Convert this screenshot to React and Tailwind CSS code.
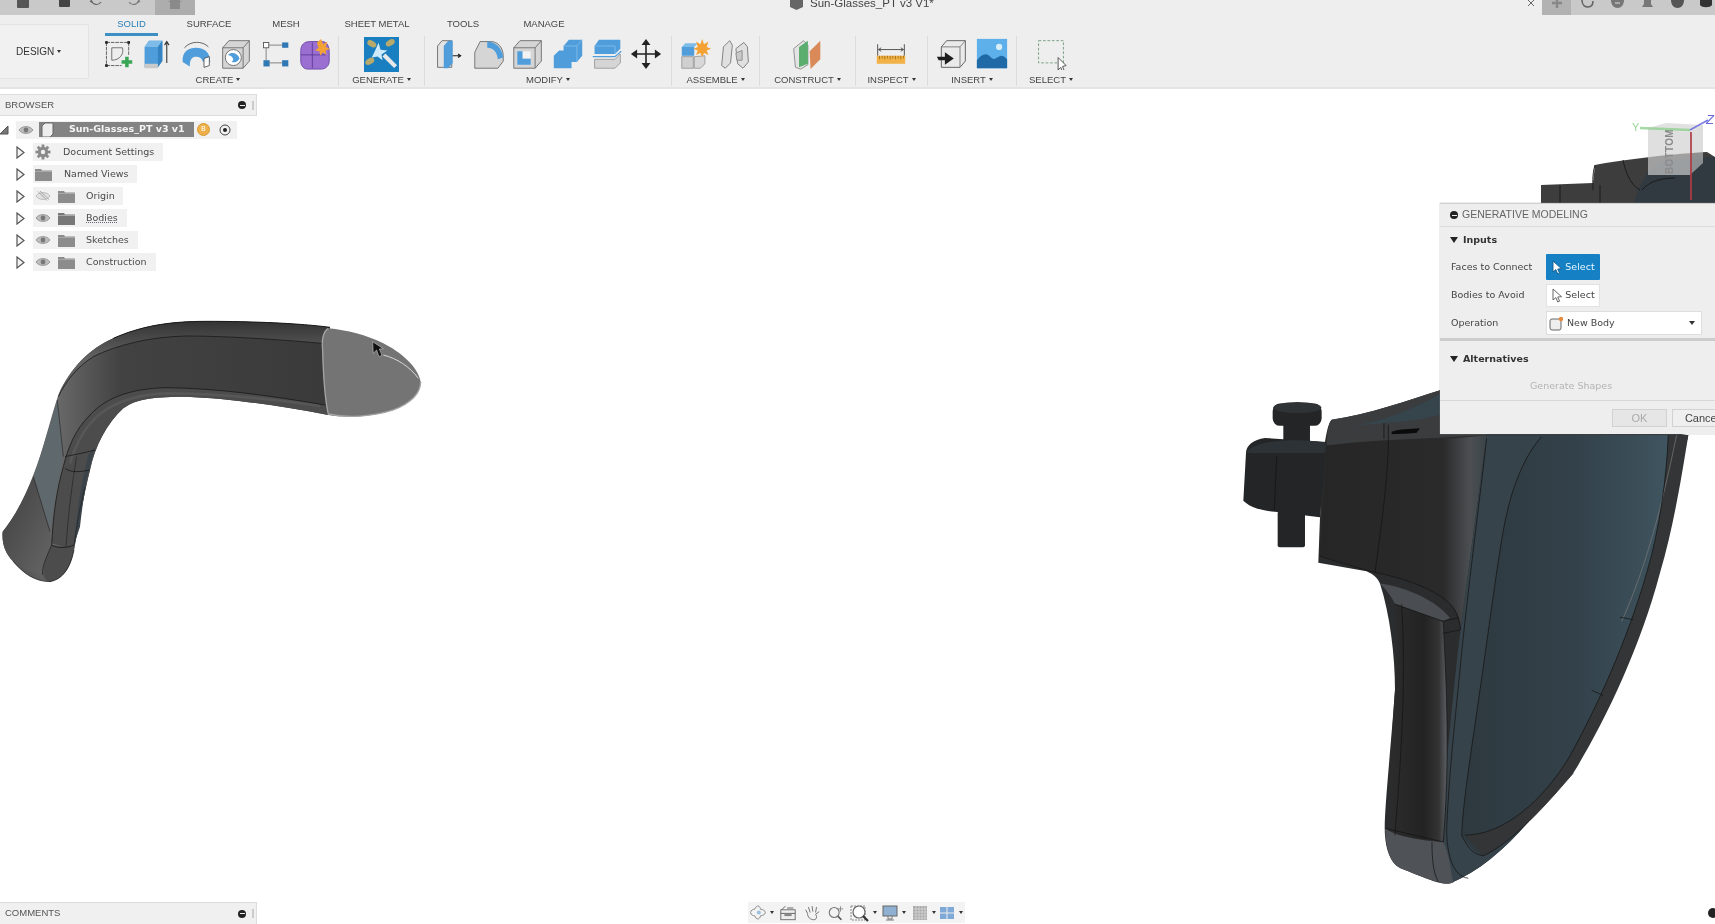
import React from "react";

const Eye = ({ off }) => (
  <svg width="16" height="12" viewBox="0 0 16 12">
    <path d="M1 6 C4 1.5 12 1.5 15 6 C12 10.5 4 10.5 1 6Z" fill={off ? "#e4e4e4" : "#bdbdbd"} stroke={off ? "#bbb" : "#999"} strokeWidth="1" />
    <circle cx="8" cy="6" r="2.4" fill={off ? "#ddd" : "#777"} />
    {off && <path d="M3 1.5 L12 10.5 M5 1 L14 9.5" stroke="#aaa" strokeWidth="1" />}
  </svg>
);
const Folder = ({ dotted }) => (
  <svg width="17" height="13" viewBox="0 0 17 13">
    <path d="M0 1 H6 L7 2.5 H17 V13 H0Z" fill={dotted ? "#777" : "#8c8c8c"} />
    <path d="M0 3.5 H17" stroke="#a8a8a8" strokeWidth="1" />
  </svg>
);
const Tri = () => (
  <svg width="9" height="13" viewBox="0 0 9 13" className="shrink-0">
    <path d="M1 1 L8 6.5 L1 12Z" fill="#f4f4f4" stroke="#555" strokeWidth="1.2" />
  </svg>
);
const Row = ({ label, eye, off, icon, dotted, w }) => (
  <div className="flex items-center h-[22px] pl-[16px]">
    <Tri />
    <div className={`ml-[8px] h-[18px] flex items-center bg-[#f1f1f1] ${w}`}>
      {eye ? (
        <>
          <span className="ml-[2px] flex"><Eye off={off} /></span>
          <span className="ml-[7px] flex"><Folder dotted={dotted} /></span>
          <span className={`ml-[11px] text-[#4a4a4a] ${dotted ? "underline decoration-dotted decoration-[#667] " : ""}`}>{label}</span>
        </>
      ) : (
        <>
          <span className="ml-[2px] flex">{icon}</span>
          <span className="ml-[12px] text-[#4a4a4a]">{label}</span>
        </>
      )}
    </div>
  </div>
);
const Gear = () => (
  <svg width="16" height="16" viewBox="0 0 16 16">
    <g fill="#8a8a8a">
      <circle cx="8" cy="8" r="5.2" />
      <rect x="6.6" y="0.5" width="2.8" height="15" />
      <rect x="0.5" y="6.6" width="15" height="2.8" />
      <rect x="6.6" y="0.5" width="2.8" height="15" transform="rotate(45 8 8)" />
      <rect x="6.6" y="0.5" width="2.8" height="15" transform="rotate(-45 8 8)" />
    </g>
    <circle cx="8" cy="8" r="2.2" fill="#f1f1f1" />
  </svg>
);

const B = "#4f9edb", BD = "#2f78b4", G = "#d5d5d5", O = "#6a6a6a";
const IconWrap = ({ children }) => (
  <svg width="32" height="32" viewBox="0 0 36 36">{children}</svg>
);
const tools = {
  sketch: (
    <IconWrap>
      <path d="M5 5 H30 M5 5 V31 M5 31 H22 M30 5 V20" stroke="#555" strokeWidth="1" strokeDasharray="4 1" fill="none" />
      <path d="M11 11 H23 C25 18 20 25 11 25Z" fill="none" stroke="#666" />
      <g fill="#222"><rect x="3.5" y="3.5" width="3" height="3" /><rect x="28.5" y="3.5" width="3" height="3" /><rect x="3.5" y="29.5" width="3" height="3" /></g>
      <path d="M26 21 H30 V25 H34 V29 H30 V33 H26 V29 H22 V25 H26Z" fill="#3aa655" />
    </IconWrap>
  ),
  extrude: (
    <IconWrap>
      <path d="M4 10 L9 3 H24 V26 L19 33 H4Z" fill={B} />
      <path d="M19 10 H4 L9 3 H24Z" fill="#7dbbe9" />
      <path d="M19 10 V33 L24 26 V3Z" fill="#3583c2" />
      <path d="M4 29 H19 V34 H4Z" fill="#c9c9c9" />
      <path d="M29 28 V5 M26.5 8 L29 4 L31.5 8" stroke="#333" strokeWidth="1.2" fill="none" />
    </IconWrap>
  ),
  revolve: (
    <IconWrap>
      <path d="M3 27 C2 15 10 11 18 11 C26 11 34 15 34 27 L26 27 C25 23 22 21 18 21 C14 21 11 23 11 32 L3 27Z" fill={B} />
      <path d="M5 11 C12 3 25 3 32 10" stroke="#555" fill="none" />
      <path d="M27 23 L33 21 V31 L27 33Z" fill="#fff" stroke="#555" />
    </IconWrap>
  ),
  hole: (
    <IconWrap>
      <path d="M3 11 L10 3 H33 V26 L26 34 H3Z" fill={G} stroke={O} />
      <path d="M3 11 H26 V34 M26 11 L33 3" fill="none" stroke={O} />
      <circle cx="15" cy="22" r="9" fill="#fff" stroke="#666" />
      <path d="M9 19 C13 15 20 17 22 23 C20 27 16 28 13 27 C17 24 14 20 9 19Z" fill={B} />
    </IconWrap>
  ),
  tree: (
    <IconWrap>
      <rect x="5" y="5" width="6" height="6" fill="#fff" stroke="#555" />
      <rect x="26" y="5" width="7" height="6" fill={BD} />
      <rect x="5" y="25" width="7" height="7" fill={BD} />
      <rect x="26" y="25" width="7" height="7" fill={BD} />
      <path d="M11 8 H26 M8 11 V25 M12 28 H26" stroke="#777" />
    </IconWrap>
  ),
  form: (
    <IconWrap>
      <path d="M2 14 C2 8 6 4 12 4 H26 C32 4 34 10 34 16 V26 C34 31 30 35 25 35 H10 C5 35 2 31 2 26Z" fill="#9a6fd1" stroke="#6a45a5" />
      <path d="M2 19 H30 M15 5 V34" stroke="#5c3a96" strokeWidth="1" />
      <path d="M25 1 L27 7 L32 4 L30 10 L35 12 L30 14 L31 19 L27 16 L24 20 L23 15 L18 14 L22 11 L20 5Z" fill="#f3a233" />
    </IconWrap>
  ),
  fillet: (
    <IconWrap>
      <path d="M2 16 L8 4 H20 C28 4 34 11 34 20 V26 L28 34 H2Z" fill={G} stroke={O} />
      <path d="M16 4 C25 4 33 11 34 22 L28 24 C27 16 23 11 16 11Z" fill={B} />
    </IconWrap>
  ),
  press: (
    <IconWrap>
      <path d="M4 9 L9 3 H20 V33 H4Z" fill="#e3e3e3" stroke={O} />
      <path d="M11 9 L16 3 H21 V28 L16 34 H11Z" fill={B} />
      <path d="M21 20 H29 M27 18 L30 20 L27 22" stroke="#222" strokeWidth="1.3" fill="none" />
    </IconWrap>
  ),
  shell: (
    <IconWrap>
      <path d="M2 11 L9 3 H33 V26 L26 34 H2Z" fill={G} stroke={O} />
      <path d="M2 11 H26 V34 M26 11 L33 3" fill="none" stroke={O} />
      <path d="M6 15 H12 V23 H21 V30 H6Z" fill={B} />
      <path d="M12 15 H21 V23 H12Z" fill="#f3f3f3" />
    </IconWrap>
  ),
  combine: (
    <IconWrap>
      <path d="M13 9 L19 2 H34 V20 L28 27 H22 V34 H2 V20 L8 14 H13Z" fill={B} />
      <path d="M13 9 H28 V27 M28 9 L34 2" stroke="#7dbbe9" fill="none" />
    </IconWrap>
  ),
  offset: (
    <IconWrap>
      <path d="M4 9 L9 2 H33 V12 L27 18 H4Z" fill={B} />
      <path d="M4 9 H27 V18" stroke="#7dbbe9" fill="none" />
      <path d="M2 21 L27 21 L34 15" stroke="#4f9edb" strokeWidth="1.4" fill="none" />
      <path d="M4 24 H27 L33 18 V28 L27 34 H4Z" fill={G} stroke="#999" />
    </IconWrap>
  ),
  move: (
    <IconWrap>
      <path d="M18 3 V33 M3 18 H33" stroke="#222" strokeWidth="1.8" />
      <path d="M18 1 L13 8 H23Z M18 35 L13 28 H23Z M1 18 L8 13 V23Z M35 18 L28 13 V23Z" fill="#222" />
    </IconWrap>
  ),
  comp: (
    <IconWrap>
      <path d="M2 10 H16 V20 H2Z" fill={B} />
      <path d="M2 10 L6 6 H20 L16 10Z" fill="#7dbbe9" />
      <path d="M2 21 H15 V34 H2Z" fill="#d0d0d0" stroke="#999" />
      <path d="M16 21 L28 20 V29 L23 34 H16Z" fill="#d8d8d8" stroke="#999" />
      <path d="M25 1 L27 7 L32 4 L30 10 L35 12 L30 14 L32 19 L27 17 L25 22 L23 17 L18 19 L20 14 L15 12 L20 10 L18 4 L23 7Z" fill="#f3a233" />
    </IconWrap>
  ),
  joint: (
    <IconWrap>
      <path d="M3 31 L5 10 L12 3 L15 8 L13 28 L7 34Z" fill="#e0e0e0" stroke="#777" />
      <path d="M19 12 L28 5 L32 10 L33 27 L27 34 L21 29Z" fill="#e0e0e0" stroke="#777" />
      <path d="M19 17 L26 14 V25 L20 25Z" fill="#c8c8c8" stroke="#888" />
    </IconWrap>
  ),
  plane: (
    <IconWrap>
      <path d="M5 33 L3 12 L14 3 L19 8 L19 30 L11 35Z" fill="#e4e4e4" stroke="#888" />
      <path d="M9 33 L9 10 L19 3 V29Z" fill="#5cae6e" />
      <path d="M21 15 L33 3 V24 L22 35Z" fill="#d98a58" />
    </IconWrap>
  ),
  measure: (
    <IconWrap>
      <path d="M3 7 V20 M33 7 V20 M4 13 H32 M7 11 L4 13 L7 15 M29 11 L32 13 L29 15" stroke="#444" fill="none" />
      <rect x="2" y="20" width="32" height="9" fill="#f1b247" />
      <path d="M5 20 V24 M8 20 V23 M11 20 V24 M14 20 V23 M17 20 V24 M20 20 V23 M23 20 V24 M26 20 V23 M29 20 V24 M32 20 V23" stroke="#a36f14" />
    </IconWrap>
  ),
  insert: (
    <IconWrap>
      <path d="M6 10 L12 3 H33 V26 L27 33 H6Z" fill="#eaeaea" stroke="#555" />
      <path d="M6 10 H27 V33 M27 10 L33 3" fill="none" stroke="#777" />
      <path d="M1 21 H10 V16 L20 23 L10 30 V25 H3Z" fill="#1e1e1e" />
    </IconWrap>
  ),
  image: (
    <IconWrap>
      <rect x="1" y="1" width="34" height="33" fill="#5db0ea" />
      <circle cx="26" cy="10" r="3.5" fill="#d7eefb" />
      <path d="M1 34 V25 C7 17 12 16 17 22 C21 26 24 21 28 20 C31 20 33 22 35 24 V34Z" fill="#1f6aa6" />
    </IconWrap>
  ),
  select: (
    <IconWrap>
      <rect x="4" y="3" width="28" height="25" fill="none" stroke="#6f9a7e" strokeDasharray="3 2" />
      <path d="M26 22 L26 36 L29 33 L31 38 L33 37 L31 32 L35 31Z" fill="#fff" stroke="#444" />
    </IconWrap>
  ),
  generate: (
    <svg width="35" height="35" viewBox="0 0 36 36">
      <rect x="0" y="0" width="36" height="36" fill="#1a7fc0" />
      <ellipse cx="8" cy="7" rx="5" ry="3" fill="#b9a96a" transform="rotate(30 8 7)" />
      <ellipse cx="27" cy="6" rx="5" ry="3" fill="#b9a96a" transform="rotate(-30 27 6)" />
      <ellipse cx="6" cy="25" rx="5" ry="3" fill="#b9a96a" transform="rotate(-30 6 25)" />
      <path d="M15 6 L17 13 L24 14 L18 18 L19 24 L14 20 L8 21 L11 15Z" fill="#cfeafa" />
      <path d="M19 20 L31 32 L34 29 L22 17Z" fill="#e8e8e8" />
    </svg>
  ),
};

const Caret = () => <span className="inline-block ml-[3px] align-[2px] border-x-[2.5px] border-x-transparent border-t-[3px] border-t-[#333]" />;

const Group = ({ items, label, w, sep = true, row = "justify-center" }) => (
  <div className={`flex flex-col items-center shrink-0 h-[50px] ${w} ${sep ? "border-r border-r-[#dcdcdc]" : ""}`}>
    <div className={`flex items-center h-[36px] w-full ${row}`}>
      {items.map((k, i) => (
        <span key={i} className="w-[39.4px] flex justify-center">{tools[k]}</span>
      ))}
    </div>
    <div className="mt-[2px] text-[9.5px] leading-[12px] text-[#444]">{label}<Caret /></div>
  </div>
);

const tabs = [
  ["SOLID", "ml-[7px] w-[53px] text-[#2a7fb8] border-b-[3px] border-b-[#3d8fc4]"],
  ["SURFACE", "ml-[21px] w-[60px] pb-[3px]"],
  ["MESH", "ml-[27px] w-[40px] pb-[3px]"],
  ["SHEET METAL", "ml-[34px] w-[74px] pb-[3px]"],
  ["TOOLS", "ml-[29px] w-[40px] pb-[3px]"],
  ["MANAGE", "ml-[36px] w-[50px] pb-[3px]"],
];

const Models = () => (
  <svg className="absolute left-0 top-0" width="1715" height="924" viewBox="0 0 1715 924">
    <defs>
      <linearGradient id="tBody" x1="0" x2="1" y1="0" y2="0">
        <stop offset="0" stopColor="#4a4a4a" />
        <stop offset="0.17" stopColor="#686868" />
        <stop offset="0.36" stopColor="#424242" />
        <stop offset="1" stopColor="#3a3a3a" />
      </linearGradient>
      <linearGradient id="tStrip" x1="0" x2="0" y1="0" y2="1">
        <stop offset="0" stopColor="#333" />
        <stop offset="0.5" stopColor="#636363" />
        <stop offset="1" stopColor="#5c5c5c" />
      </linearGradient>
      <linearGradient id="tFoot" x1="0" x2="1" y1="0" y2="1">
        <stop offset="0" stopColor="#3f3f3f" />
        <stop offset="1" stopColor="#666" />
      </linearGradient>
      <linearGradient id="lens" x1="0" x2="1" y1="0" y2="0">
        <stop offset="0" stopColor="#2e393f" />
        <stop offset="0.55" stopColor="#33414a" />
        <stop offset="1" stopColor="#3f5560" />
      </linearGradient>
      <linearGradient id="front" x1="0" x2="1" y1="0" y2="0">
        <stop offset="0" stopColor="#262626" />
        <stop offset="0.74" stopColor="#2a2a2a" />
        <stop offset="0.9" stopColor="#4c4f52" />
        <stop offset="1" stopColor="#3b4449" />
      </linearGradient>
      <linearGradient id="grip" x1="0" x2="1" y1="0" y2="0">
        <stop offset="0" stopColor="#2c2c2c" />
        <stop offset="0.6" stopColor="#232323" />
        <stop offset="0.85" stopColor="#333" />
        <stop offset="1" stopColor="#5d6064" />
      </linearGradient>
    </defs>

    <g transform="translate(0,300) scale(0.3333)">
      <path d="M990 82 C900 70 760 64 620 64 C500 64 420 80 340 115 C270 145 210 205 175 285 C150 360 130 450 100 525 C75 590 45 650 8 695 C5 730 15 760 40 785 C70 820 105 845 150 845 C190 838 212 800 222 750 C235 680 250 590 270 510 C285 440 320 370 370 325 C410 295 470 290 560 290 C680 295 830 315 985 345 L990 82Z" fill="url(#tBody)" />
      <path d="M990 82 C900 70 760 64 620 64 C500 64 420 80 340 115 C270 145 210 205 175 285 C195 250 225 205 280 170 C350 135 450 110 560 108 C650 108 800 115 965 130Z" fill="url(#tStrip)" />
      <path d="M975 315 C800 285 650 265 500 263 C400 265 320 290 270 345 C225 390 205 440 190 500 C170 570 160 640 155 730 L222 750 C235 680 250 590 270 510 C285 440 320 370 370 325 C410 295 470 290 560 290 C680 295 830 315 985 345Z" fill="#4c4c4c" />
      <path d="M960 318 C800 295 660 280 500 280 C410 282 330 310 285 355 C245 395 225 440 210 490" stroke="#666" strokeWidth="8" fill="none" opacity="0.45" />
      <path d="M265 465 C248 530 232 620 222 735 L240 680 C250 590 262 520 285 440Z" fill="#3b444a" />
      <path d="M172 300 L190 470 C175 540 165 600 150 690 L100 530 C130 450 150 370 172 300Z" fill="#5f686d" />
      <path d="M100 530 L150 695 L155 735 C145 760 130 790 128 825 C90 815 60 805 40 785 C15 760 5 730 8 695 C45 650 75 590 100 530Z" fill="url(#tFoot)" />
      <path d="M155 735 L222 745 C215 800 190 838 150 845 C125 840 120 810 155 735Z" fill="#4c4c4c" />
      <g fill="none" stroke="#191919" strokeWidth="2.4">
        <path d="M965 130 C800 115 650 108 560 108 C450 110 350 135 280 170 C225 205 195 250 175 290" />
        <path d="M975 315 C800 285 650 265 500 263 C400 265 320 290 270 345 C225 390 205 440 190 500 C170 570 160 640 155 735" />
        <path d="M172 300 L190 470 M100 530 L150 695" strokeWidth="1.6" />
        <path d="M155 735 C170 745 200 745 222 735 M195 470 C215 465 250 460 285 450 M195 505 C215 520 245 515 270 510" />
        <path d="M255 560 C240 620 230 680 222 735 M230 470 C215 560 205 640 198 740" strokeWidth="1.6" />
        <path d="M155 735 C140 770 125 800 128 825 M40 785 C70 820 105 845 150 845 C190 838 212 800 222 750" strokeWidth="2" />
        <path d="M990 82 C900 70 760 64 620 64 C500 64 420 80 340 115" strokeWidth="3" />
      </g>
      <path d="M985 85 C1040 90 1100 105 1150 130 C1200 155 1255 200 1262 245 C1262 280 1230 310 1180 330 C1120 350 1040 355 985 345 C975 300 965 180 968 120 C970 100 975 90 985 85Z" fill="#747474" />
      <path d="M985 85 C970 95 965 120 968 150 C970 220 975 300 985 342 C1040 355 1120 350 1180 330 C1230 310 1262 280 1262 245" stroke="#a4a4a4" strokeWidth="4" fill="none" />
      <path d="M1150 165 C1190 175 1230 200 1255 235" stroke="#d8d8d8" strokeWidth="3" fill="none" />
      <path d="M1118 125 L1120 160 L1130 150 L1137 170 L1146 166 L1138 147 L1150 146Z" fill="#111" stroke="#ddd" strokeWidth="1.5" />
    </g>

    <g transform="translate(1220,380) scale(0.3333,0.3448)">
      <path d="M335 115 C450 100 560 60 660 30 L1405 160 C1370 300 1320 480 1240 690 C1170 880 1080 1060 960 1240 C880 1340 790 1420 690 1460 C660 1465 620 1445 540 1415 C510 1400 498 1360 495 1320 C490 1270 510 1100 525 900 C525 800 510 680 480 590 C470 570 460 565 440 555 L295 530 C300 400 305 250 315 180 C320 150 325 125 335 115Z" fill="#2b2c2d" />
      <path d="M320 185 C315 250 305 400 298 510 L450 555 C560 575 650 610 690 650 C710 670 720 690 722 720 L800 160 L700 170 L500 170 C430 175 380 180 320 185Z" fill="url(#front)" />
      <path d="M335 115 C450 100 560 60 660 30 L810 30 L800 160 L500 175 C430 178 370 185 320 190 C322 150 325 125 335 115Z" fill="#3a3c3e" />
      <path d="M400 132 C500 118 600 75 660 40 L660 100 C600 120 500 125 400 132Z" fill="#36444c" />
      <path d="M515 150 C540 142 570 142 600 140 L590 153 C570 156 540 156 515 157Z" fill="#0b0b0b" />
      <path d="M800 160 L1405 160 C1370 300 1320 480 1240 690 C1170 880 1080 1060 960 1240 C880 1340 790 1420 690 1460 L660 1340 C680 1100 700 900 722 720Z" fill="#36434a" />
      <path d="M965 160 C920 210 880 300 860 390 C840 470 810 700 780 900 C750 1100 730 1220 725 1320 C740 1340 760 1370 790 1380 C880 1340 980 1230 1060 1100 C1150 950 1240 760 1300 560 C1330 430 1340 280 1345 160Z" fill="url(#lens)" />
      <path d="M1345 160 C1340 280 1320 430 1280 560 C1220 760 1130 950 1050 1090 C970 1220 850 1320 735 1320 L790 1380 C880 1340 980 1230 1060 1140 C1150 1000 1260 780 1320 560 C1360 430 1385 280 1405 160Z" fill="#333536" />
      <path d="M1370 160 C1340 300 1290 520 1205 700" stroke="#777" strokeWidth="3" fill="none" opacity="0.7" />
      <path d="M525 650 L670 700 C680 900 690 1100 670 1340 L525 1320 C500 1300 510 1100 525 900 C535 800 530 720 525 650Z" fill="url(#grip)" />
      <path d="M480 590 C560 600 650 640 690 690 L670 700 L525 650 C510 620 495 605 480 590Z" fill="#4a4e52" />
      <path d="M495 1300 C520 1320 590 1335 670 1340 C690 1380 690 1420 700 1458 C660 1465 620 1445 540 1415 C510 1400 498 1360 495 1300Z" fill="#4f5357" />
      <g fill="#242526">
        <rect x="158" y="68" width="147" height="65" rx="22" />
        <rect x="190" y="125" width="80" height="80" rx="6" />
        <rect x="173" y="380" width="82" height="105" rx="6" />
        <path d="M320 180 L135 168 C100 172 78 190 78 212 L70 350 C90 370 130 380 165 382 L300 398Z" />
      </g>
      <ellipse cx="232" cy="80" rx="72" ry="16" fill="#2f3336" />
      <path d="M78 212 C100 170 250 170 318 182 L316 212 L130 212Z" fill="#2c3236" />
      <g fill="none" stroke="#141414" strokeWidth="2.2">
        <path d="M505 130 L505 200 C500 320 480 450 465 560 M492 125 L492 170" />
        <path d="M170 222 L163 380" />
        <path d="M800 170 C780 340 750 560 725 790 C710 950 690 1100 680 1300 C680 1380 700 1440 745 1445" />
        <path d="M965 165 C920 210 880 300 860 390 C840 470 810 700 780 900 C750 1100 730 1220 725 1320 C745 1360 760 1375 790 1380 C880 1340 980 1230 1060 1140" />
        <path d="M298 510 C340 525 400 540 450 555 C560 575 650 610 690 650 C710 670 718 690 722 725" />
        <path d="M525 650 L670 700 C680 900 690 1100 670 1340 L495 1300 M545 650 C560 900 540 1130 525 1320 M636 1340 C636 1390 640 1430 655 1455" />
        <path d="M665 700 L715 690 M668 735 L720 725 M1200 688 L1240 695 M1115 900 L1150 915" />
        <path d="M1345 160 C1340 280 1320 430 1280 560 C1220 760 1130 950 1050 1090 C970 1220 850 1320 735 1320" />
      </g>
    </g>

    <path d="M1541 185 L1593 183 L1595 165 C1620 160 1680 153 1707 152 L1715 157 V210 H1541Z" fill="#3d3d3e" />
    <path d="M1632 210 C1640 180 1650 165 1665 160 L1715 157 V210Z" fill="#303a40" />
    <path d="M1595 165 C1592 175 1593 185 1593 190 M1560 185 V205 M1600 185 V205 M1623 160 C1625 170 1630 185 1640 190 M1642 190 C1650 180 1665 178 1675 178" stroke="#1c1c1c" fill="none" />
    <g opacity="0.85">
      <path d="M1648 128 L1666 123 L1703 125 L1690 132Z" fill="#dcdcdc" />
      <path d="M1648 128 L1690 132 V175 H1648Z" fill="#d0d0d0" opacity="0.8" />
      <path d="M1690 132 L1703 125 V163 L1690 175Z" fill="#c8c8c8" opacity="0.7" />
    </g>
    <text transform="translate(1673,174) rotate(-90)" fontFamily="'Liberation Sans',sans-serif" fontSize="10" fontWeight="700" fill="#8a8a8a" letterSpacing="0.3">BOTTOM</text>
    <path d="M1640 128 L1690 130" stroke="#8fd08f" strokeWidth="2.5" opacity="0.8" />
    <path d="M1690 130 L1708 120" stroke="#7a7ae0" strokeWidth="1.5" />
    <path d="M1691 132 V200" stroke="#b03a44" strokeWidth="2" opacity="0.85" />
    <text x="1632" y="131" fontFamily="'Liberation Sans',sans-serif" fontSize="11" fill="#9ad69a">Y</text>
    <text x="1706" y="124" fontFamily="'Liberation Sans',sans-serif" fontSize="13" fontStyle="italic" fill="#6a6ae0">Z</text>
  </svg>
);

const Arrow = ({ fill, stroke }) => (
  <svg width="12" height="15" viewBox="0 0 12 15">
    <path d="M2 1 L2 12 L4.8 9.6 L6.8 14 L8.6 13.2 L6.7 9 L10.5 8.7Z" fill={fill} stroke={stroke} strokeWidth="0.9" />
  </svg>
);

const navCells = [
  ["w-[30px]", true, <svg key="a" width="18" height="17" viewBox="0 0 22 18"><path d="M2 9 C2 6 5 5 7 5 C8 2 10 1 11 1 C13 1 14 4 14 5 C17 5 20 7 20 9 C20 12 15 13 14 13 C14 15 12 17 11 17 C9 17 8 15 7 13 C5 13 2 12 2 9Z" fill="none" stroke="#777" /><circle cx="12" cy="9" r="2.5" fill="#9dbfe0" /></svg>],
  ["w-[24px]", false, <svg key="b" width="18" height="17" viewBox="0 0 20 18"><rect x="2" y="6" width="16" height="11" fill="#eee" stroke="#666" /><path d="M3 6 L7 2 M9 4 H16 M2 10 H18" stroke="#555" /><rect x="6" y="10" width="8" height="3" fill="#888" /></svg>],
  ["w-[24px]", false, <svg key="c" width="18" height="17" viewBox="0 0 20 18"><path d="M5 10 L3 6 M8 9 L6 3 M11 8 L10 2 M14 9 L15 3 M14 11 L18 8 M5 10 C5 14 8 17 12 17 C15 17 16 14 14 11" stroke="#666" fill="none" strokeWidth="1" /></svg>],
  ["w-[23px]", false, <svg key="d" width="18" height="17" viewBox="0 0 20 18"><circle cx="8" cy="9" r="5.5" fill="none" stroke="#777" strokeWidth="1.2" /><path d="M12 13 L16 17" stroke="#555" strokeWidth="1.8" /><path d="M15 2 V8 M12 5 H18" stroke="#888" /></svg>],
  ["w-[31px]", true, <svg key="e" width="20" height="18" viewBox="0 0 20 18"><rect x="1" y="2" width="14" height="14" fill="none" stroke="#888" strokeDasharray="2 1" /><circle cx="9" cy="8" r="6" fill="#fff" stroke="#666" strokeWidth="1.2" /><path d="M13 12 L18 17" stroke="#333" strokeWidth="2.2" /></svg>],
  ["w-[30px]", true, <svg key="f" width="18" height="18" viewBox="0 0 18 18"><rect x="2" y="2" width="14" height="10" fill="#8fb0d0" stroke="#666" /><path d="M7 12 V15 H11 V12 M5 16 H13" stroke="#777" fill="none" /></svg>],
  ["w-[27px]", true, <svg key="g" width="18" height="18" viewBox="0 0 18 18"><rect x="2" y="2" width="14" height="14" fill="#aaa" /><path d="M5 2 V16 M8 2 V16 M11 2 V16 M14 2 V16 M2 5 H16 M2 8 H16 M2 11 H16 M2 14 H16" stroke="#ddd" strokeWidth="0.7" /></svg>],
  ["w-[27px]", true, <svg key="h" width="18" height="18" viewBox="0 0 18 18"><rect x="2" y="3" width="14" height="12" fill="#7fa9d6" /><path d="M9 3 V15 M2 9 H16" stroke="#eee" /></svg>],
];

const Collapse = () => (
  <span className="w-[8px] h-[8px] rounded-full bg-[#222] flex items-center"><span className="mx-[1.5px] h-[1px] w-full bg-[#eee]" /></span>
);

export default function App() {
  return (
    <div className="relative w-[1715px] h-[924px] overflow-hidden bg-white flex flex-col blur-[0.5px] font-['DejaVu_Sans',sans-serif] text-[9.5px]">
      <Models />

      <header className="relative h-[89px] shrink-0 flex flex-col bg-[#eeeeee] border-b-2 border-b-[#e4e4e4] font-['Liberation_Sans',sans-serif]">
        <div className="flex h-[15px] shrink-0 overflow-hidden">
          <div className="w-[195px] flex bg-[#c9c9c9]">
            <div className="flex-1 flex items-start">
              <span className="ml-[17px] w-[12px] h-[8px] bg-[#555] rounded-b-[1px]" />
              <span className="ml-[30px] w-[11px] h-[7px] bg-[#444] rounded-b-[1px]" />
              <svg width="14" height="7" viewBox="0 0 14 7" className="ml-[19px]"><path d="M2 0 C4 5 9 6 12 2 M1 1 L4 3" stroke="#666" strokeWidth="1.2" fill="none" /></svg>
              <svg width="14" height="7" viewBox="0 0 14 7" className="ml-[24px]"><path d="M12 0 C10 5 5 6 2 2 M13 1 L10 3" stroke="#777" strokeWidth="1.2" fill="none" /></svg>
            </div>
            <div className="w-[40px] flex justify-center bg-[#adadad]">
              <svg width="14" height="9" viewBox="0 0 14 9"><path d="M0 2 L7 -3 L14 2 H12 V9 H2 V2Z" fill="#8a8a8a" /></svg>
            </div>
          </div>
          <div className="ml-[594px] flex items-start -mt-[4px] text-[#444] text-[11.5px] leading-[14px]">
            <svg width="15" height="14" viewBox="0 0 15 14" className="mr-[6px]"><path d="M1 3 L7.5 0 L14 3 V11 L7.5 14 L1 11Z" fill="#666" /></svg>
            Sun-Glasses_PT v3 V1*
          </div>
          <div className="ml-auto flex">
            <svg width="8" height="6" viewBox="0 0 8 6" className="mr-[7px]"><path d="M1 0 L7 6 M7 0 L1 6" stroke="#666" /></svg>
            <div className="w-[173px] flex bg-[#c9c9c9]">
              <div className="w-[29px] flex justify-center bg-[#b2b2b2]"><svg width="14" height="10" viewBox="0 0 14 10"><path d="M7 0 V8 M2 3 H12" stroke="#888" strokeWidth="2.4" /></svg></div>
              <div className="flex-1 flex items-start pl-[9px] gap-[15px]">
                <svg width="15" height="9" viewBox="0 0 15 9"><path d="M2 0 C2 5 5 7 8 7 C11 7 13 5 13 1" stroke="#666" strokeWidth="1.6" fill="none" /></svg>
                <svg width="15" height="9" viewBox="0 0 15 9"><path d="M1 0 H14 C14 5 11 8 7.5 8 C4 8 1 5 1 0Z" fill="#777" /><path d="M5 3 H10" stroke="#ddd" /></svg>
                <svg width="15" height="9" viewBox="0 0 15 9"><path d="M4 0 H11 V4 L13 7 H2 L4 4Z M6 8 H9" fill="#777" /></svg>
                <svg width="15" height="9" viewBox="0 0 15 9"><path d="M1 0 H14 C14 5 11 8 7.5 8 C4 8 1 5 1 0Z" fill="#555" /></svg>
                <svg width="12" height="9" viewBox="0 0 12 9"><path d="M0 0 H12 V5 C10 8 2 8 0 5Z" fill="#333" /></svg>
              </div>
            </div>
          </div>
        </div>

        <div className="flex flex-1">
          <div className="mt-[9px] h-[55px] w-[89px] shrink-0 bg-[#f1f1f1] border border-[#e3e3e3] border-l-0 rounded-r-[2px] flex items-center pl-[16px] text-[10px] text-[#333]">
            DESIGN<Caret />
          </div>
          <div className="ml-[9px] flex-1 flex flex-col">
            <div className="flex h-[21px] text-[9.5px] text-[#444]">
              {tabs.map(([t, c]) => (
                <div key={t} className={`flex justify-center items-center whitespace-nowrap ${c}`}>{t}</div>
              ))}
            </div>
            <div className="flex">
              <Group items={["sketch", "extrude", "revolve", "hole", "tree", "form"]} label="CREATE" w="w-[241px]" row="justify-start" />
              <Group items={["generate"]} label="GENERATE" w="w-[86px]" />
              <Group items={["press", "fillet", "shell", "combine", "offset", "move"]} label="MODIFY" w="w-[247px]" />
              <Group items={["comp", "joint"]} label="ASSEMBLE" w="w-[88px]" />
              <Group items={["plane"]} label="CONSTRUCT" w="w-[96px]" />
              <Group items={["measure"]} label="INSPECT" w="w-[72px]" />
              <Group items={["insert", "image"]} label="INSERT" w="w-[89px]" />
              <Group items={["select"]} label="SELECT" w="w-[68px]" sep={false} />
            </div>
          </div>
        </div>
      </header>

      <main className="relative flex-1 flex flex-col justify-between pt-[5px]">
        <section className="w-[257px]">
          <div className="h-[22px] flex items-center justify-between bg-[#f0f0f0] border border-l-0 border-[#dcdcdc] pl-[5px] pr-[2px] font-['Liberation_Sans',sans-serif] text-[9.5px] text-[#555]">
            BROWSER
            <span className="flex items-center gap-[6px]">
              <Collapse />
              <span className="w-[2px] h-[9px] bg-[#ccc]" />
            </span>
          </div>
          <div className="pt-[2px]">
            <div className="flex items-center h-[23px]">
              <svg width="9" height="10" viewBox="0 0 9 10"><path d="M0 9 L8 1 V9Z" fill="#777" stroke="#555" /></svg>
              <div className="ml-[7px] h-[18px] w-[221px] flex items-center bg-[#f1f1f1]">
                <span className="ml-[2px] flex"><Eye /></span>
                <div className="ml-[5px] w-[155px] h-[15px] bg-[#838383] flex items-center text-[#f4f4f4] font-bold text-[9.5px] whitespace-nowrap">
                  <svg width="15" height="15" viewBox="0 0 15 15" className="ml-[1px]"><path d="M2 4 L5 1 H13 V12 L10 15 H2Z" fill="#eee" stroke="#666" /></svg>
                  <span className="ml-[14px]">Sun-Glasses_PT v3 v1</span>
                </div>
                <span className="ml-[3px] w-[13px] h-[13px] rounded-full bg-[#eeb04a] border border-[#d89a30] text-[7px] leading-[11px] text-center text-[#fff]">B</span>
                <svg width="12" height="12" viewBox="0 0 12 12" className="ml-[9px]"><circle cx="6" cy="6" r="5" fill="none" stroke="#444" /><circle cx="6" cy="6" r="2" fill="#222" /></svg>
              </div>
            </div>
            <Row label="Document Settings" icon={<Gear />} w="w-[130px]" />
            <Row label="Named Views" icon={<Folder />} w="w-[104px]" />
            <Row label="Origin" eye off w="w-[90px]" />
            <Row label="Bodies" eye dotted w="w-[94px]" />
            <Row label="Sketches" eye w="w-[105px]" />
            <Row label="Construction" eye w="w-[123px]" />
          </div>
        </section>

        <div className="flex items-end">
          <div className="w-[257px] h-[22px] flex items-center justify-between bg-[#f0f0f0] border border-l-0 border-b-0 border-[#dcdcdc] pl-[5px] pr-[2px] font-['Liberation_Sans',sans-serif] text-[9.5px] text-[#555]">
            COMMENTS
            <span className="flex items-center gap-[6px]">
              <Collapse />
              <span className="w-[2px] h-[9px] bg-[#ccc]" />
            </span>
          </div>
          <div className="ml-[491px] mb-[1px] h-[21px] w-[217px] pl-[1px] bg-[#f3f3f3] flex items-center">
            {navCells.map(([w, c, ic], i) => (
              <span key={i} className={`flex items-center shrink-0 ${w}`}>{ic}{c && <Caret />}</span>
            ))}
          </div>
          <span className="ml-auto mb-[6px] -mr-[3px] w-[10px] h-[10px] rounded-full bg-[#222]" />
        </div>

        <aside className="absolute left-[1440px] top-[114px] w-[300px] h-[231px] bg-[#eeeeee] border-t border-t-[#cfcfcf] shadow-[0_0_1px_#999] text-[#444] text-[9.5px]">
          <div className="h-[23px] flex items-center border-b border-b-[#dcdcdc] pl-[10px] font-['Liberation_Sans',sans-serif] text-[10.5px] text-[#666]">
            <span className="mr-[4px] flex"><Collapse /></span>
            GENERATIVE MODELING
          </div>
          <div className="h-[114px] border-b-[3px] border-b-[#cccccc] pt-[5px]">
            <div className="h-[16px] flex items-center pl-[10px] font-bold text-[#333]">
              <span className="border-x-[4px] border-x-transparent border-t-[6px] border-t-[#222] mr-[5px]" />Inputs
            </div>
            <div className="flex items-center mt-[6px] pl-[11px]">
              <span className="w-[95px]">Faces to Connect</span>
              <div className="w-[54px] h-[26px] bg-[#1580c4] flex items-center justify-center gap-[2px] text-[#e8f6ff] rounded-[1px]"><Arrow fill="#fff" stroke="#0d5a8d" />Select</div>
            </div>
            <div className="flex items-center mt-[4px] pl-[11px]">
              <span className="w-[95px]">Bodies to Avoid</span>
              <div className="w-[54px] h-[23px] bg-white border border-[#e2e2e2] flex items-center justify-center gap-[2px]"><Arrow fill="#fff" stroke="#555" />Select</div>
            </div>
            <div className="flex items-center mt-[4px] pl-[11px]">
              <span className="w-[95px]">Operation</span>
              <div className="w-[156px] h-[24px] bg-white border border-[#dedede] flex items-center pl-[2px] pr-[6px]">
                <svg width="15" height="15" viewBox="0 0 15 15"><rect x="1" y="3" width="11" height="11" rx="2" fill="#eee" stroke="#666" /><circle cx="12" cy="3" r="2.2" fill="#e88a3c" /></svg>
                <span className="ml-[3px]">New Body</span>
                <span className="ml-auto border-x-[3px] border-x-transparent border-t-[4px] border-t-[#333]" />
              </div>
            </div>
          </div>
          <div className="h-[60px] border-b border-b-[#d8d8d8] pt-[10px]">
            <div className="h-[16px] flex items-center pl-[10px] font-bold text-[#333]">
              <span className="border-x-[4px] border-x-transparent border-t-[6px] border-t-[#222] mr-[5px]" />Alternatives
            </div>
            <div className="mt-[12px] ml-[90px] text-[#b4b4b4]">Generate Shapes</div>
          </div>
          <div className="flex pt-[8px] pl-[172px] gap-[5px] font-['Liberation_Sans',sans-serif] text-[11px]">
            <div className="w-[55px] h-[18px] flex items-center justify-center bg-[#e6e6e6] border border-[#d2d2d2] text-[#aaa]">OK</div>
            <div className="w-[60px] h-[18px] flex items-center justify-center bg-[#efefef] border border-[#d2d2d2] text-[#444]">Cancel</div>
          </div>
        </aside>
      </main>
    </div>
  );
}
